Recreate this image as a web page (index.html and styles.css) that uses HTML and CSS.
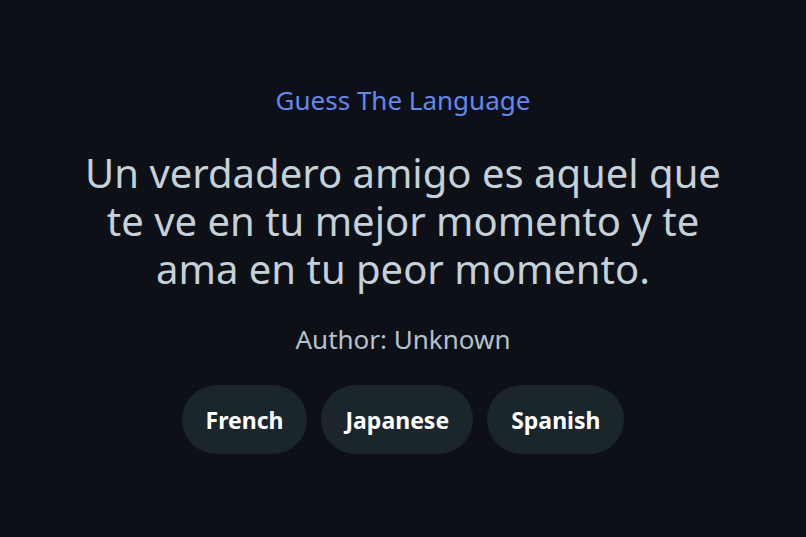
FILE: index.html
```html
<!DOCTYPE html>
<html>
<head>
	<meta charset="utf-8">
	<title>Guess The Language</title>
	<link rel="stylesheet" href="styles.css">
</head>
<body>
	<main class="game">
		<h1 class="game-title">Guess The Language</h1>
		<p class="quote">Un verdadero amigo es aquel que te ve en tu mejor momento y te ama en tu peor momento.</p>
		<p class="author">Author: Unknown</p>
		<div class="choices">
			<button class="choice">French</button>
			<button class="choice">Japanese</button>
			<button class="choice">Spanish</button>
		</div>
	</main>
</body>
</html>
```

FILE: styles.css
```css
html, body { height: 100%; }
body { margin: 0; background: #0d1117; color: #c9d1d9; font-family: "Noto Sans", "Open Sans", sans-serif; }

.game { min-height: 100%; display: flex; flex-direction: column; align-items: center; justify-content: center; text-align: center; }
.game-title { margin: 0 0 32px; font-size: 26px; line-height: 34px; font-weight: normal; color: #6189f0; }
.quote { margin: 0; max-width: 650px; font-size: 40px; line-height: 48px; color: #c5d1d9; }
.author { margin: 28px 0 28px; font-size: 26px; line-height: 36px; color: #b5c2cb; }

.choices { display: flex; gap: 14px; }
.choice { padding: 0 24px; height: 69px; border: 0; border-radius: 35px; background: #1b252c; color: #fff; font: bold 23px "Noto Sans", "Open Sans", sans-serif; cursor: pointer; }
```
